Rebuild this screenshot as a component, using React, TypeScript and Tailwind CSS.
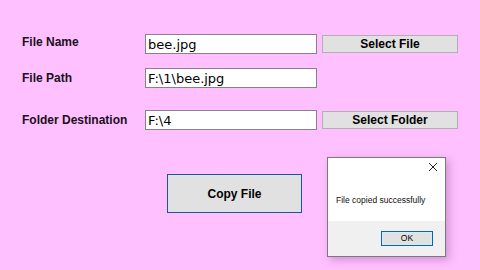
import React from "react";

const Row = ({
  label,
  value,
  button,
  className,
  labelClass,
}: {
  label: string;
  value: string;
  button?: string;
  className?: string;
  labelClass?: string;
}) => (
  <div className={`flex items-center ${className ?? ""}`}>
    <div className={`w-[123px] text-[12px] font-bold text-[#1a1020] leading-none ${labelClass ?? ""}`}>{label}</div>
    <div className="w-[172px] h-[20px] bg-white border border-[#8a7f8e] flex items-center pl-[2px] font-['DejaVu_Sans',sans-serif] text-[13px] text-black leading-none">
      {value}
    </div>
    {button && (
      <div className="ml-[5px] w-[136px] h-[18px] bg-[#e1e1e1] border border-[#b3adb4] flex items-center justify-center text-[12px] font-bold text-black leading-none">
        {button}
      </div>
    )}
  </div>
);

export default function App() {
  return (
    <div className="relative w-[480px] h-[270px] overflow-hidden bg-[#ffc0ff] font-['Liberation_Sans',Arial,sans-serif]">
      <div className="flex flex-col pl-[22px] pt-[34px]">
        <Row label="File Name" value="bee.jpg" button="Select File" labelClass="-mt-[4px]" />
        <Row label="File Path" value="F:\1\bee.jpg" className="mt-[14px]" />
        <Row label="Folder Destination" value="F:\4" button="Select Folder" className="mt-[22px]" />
        <div className="mt-[44px] ml-[145px] w-[135px] h-[39px] border border-[#2b4f8f] bg-[#e1e1e1] shadow-[inset_0_0_0_1px_#cfe6f7] flex items-center justify-center text-[12px] font-bold text-black">
          Copy File
        </div>
      </div>

      {/* message box */}
      <div className="absolute left-[327px] top-[157px] w-[119px] h-[100px] bg-white border border-[#7d7680] shadow-[3px_3px_8px_rgba(120,60,120,0.35)] flex flex-col">
        <div className="flex justify-end pr-[7px] pt-[4px] h-[20px]">
          <svg width="10" height="10" viewBox="0 0 10 10">
            <path d="M1 1 L9 9 M9 1 L1 9" stroke="#222" strokeWidth="1" />
          </svg>
        </div>
        <div className="flex-1 pl-[8px] pt-[18px] text-[8.5px] text-[#111] leading-none">File copied successfully</div>
        <div className="h-[35px] bg-[#f0f0f0] flex items-center justify-end pr-[12px]">
          <div className="w-[52px] h-[15px] border border-[#0a64b4] bg-[#e1e1e1] shadow-[inset_0_0_0_1px_#d6ebfa] flex items-center justify-center text-[8.5px] text-black">
            OK
          </div>
        </div>
      </div>
    </div>
  );
}
